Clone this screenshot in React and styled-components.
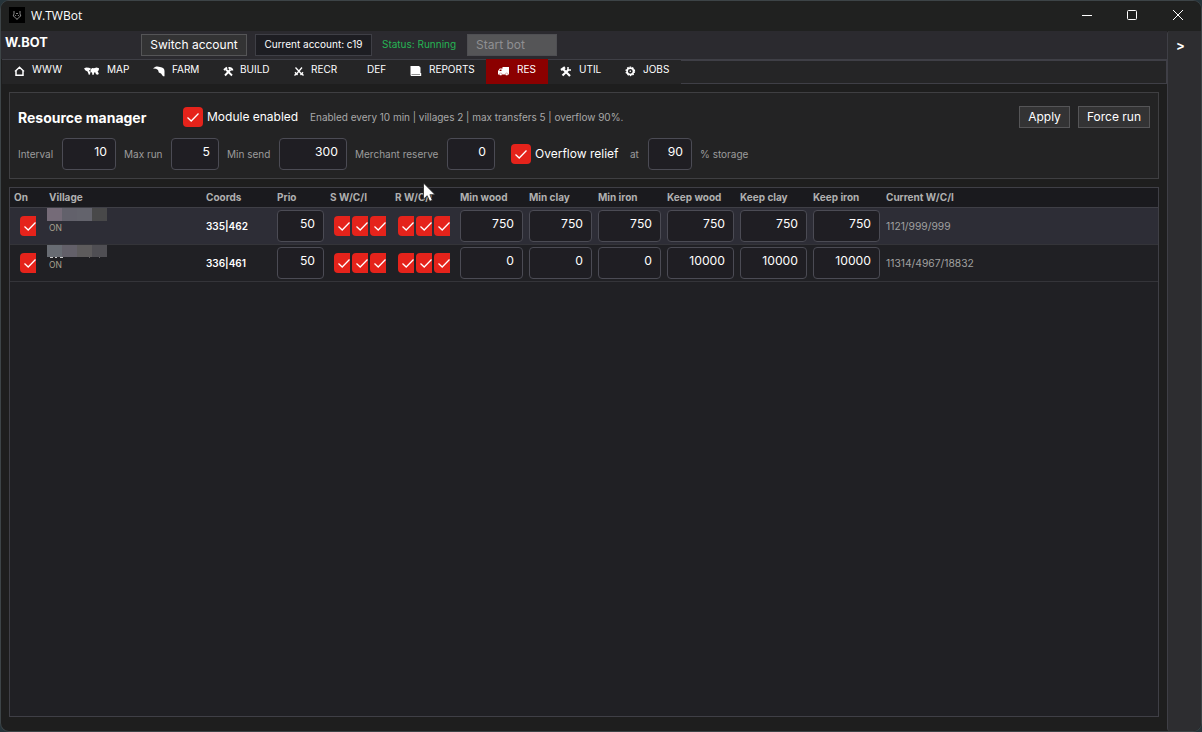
import React from 'react';
import styled, { createGlobalStyle } from 'styled-components';

const GlobalStyle = createGlobalStyle`
  * {
    box-sizing: border-box;
  }

  body {
    margin: 0;
    overflow: hidden;
    background: #26343a;
    font-family: Inter, 'Liberation Sans', sans-serif;
    color: #fff;
  }

  button {
    font-family: inherit;
  }
`;

const Window = styled.div`
  display: flex;
  flex-direction: column;
  width: 1202px;
  height: 732px;
  border: 1px solid #3d4447;
  border-radius: 9px;
  overflow: hidden;
  background: #1e1e1e;
`;

const TitleBar = styled.header`
  display: flex;
  align-items: center;
  flex: none;
  height: 30px;
  padding: 0 0 2px 8px;
  background: #202120;
`;

const AppIcon = styled.div`
  display: flex;
  align-items: center;
  justify-content: center;
  width: 16px;
  height: 16px;
  background: #000;
`;

const WindowTitle = styled.span`
  flex: 1;
  margin-left: 6px;
  padding-top: 1px;
  font-family: 'Open Sans', 'Noto Sans', sans-serif;
  font-size: 12px;
  line-height: 16px;
`;

const WindowButton = styled.div`
  display: flex;
  align-items: center;
  justify-content: center;
  width: 46px;
  height: 28px;
`;

const Main = styled.div`
  display: flex;
  flex: 1;
  min-height: 0;
`;

const Content = styled.main`
  display: flex;
  flex-direction: column;
  flex: 1;
  min-width: 0;
`;

const SidePanel = styled.aside`
  width: 34px;
  padding: 5px 0 0 8px;
  border-left: 1px solid #3f3f46;
  border-radius: 3px 0 0 3px;
  background: #2d2d30;
  font-size: 13px;
  font-weight: 700;
  line-height: 18px;
`;

const AccountBar = styled.div`
  display: flex;
  align-items: center;
  flex: none;
  height: 28px;
  padding-left: 4px;
  background: #2b2a2f;
`;

const Brand = styled.div`
  width: 136px;
  margin-top: -5px;
  font-size: 12.8px;
  font-weight: 700;
  line-height: 18px;
`;

const Button = styled.button`
  width: ${({ $width }) => $width}px;
  height: 22px;
  padding: 0 0 1px;
  border: 1px solid #555557;
  background: #333334;
  color: #fff;
  font-size: 12px;
  white-space: nowrap;

  &:disabled {
    padding-left: 8px;
    border-color: #4f4f53;
    background: #555557;
    color: #8f8f92;
    text-align: left;
  }
`;

const AccountName = styled.div`
  width: 117px;
  height: 22px;
  margin-left: 8px;
  border: 1px solid #3f3f46;
  background: #1d1d22;
  font-size: 10px;
  line-height: 19px;
  text-align: center;
  white-space: nowrap;
`;

const Status = styled.div`
  width: 85px;
  margin: -2px 0 0 10px;
  color: #26b554;
  font-size: 10px;
  line-height: 20px;
  white-space: nowrap;
`;

const TabBar = styled.nav`
  display: flex;
  flex: none;
  height: 25px;
  padding-left: 1px;
`;

const Tab = styled.div`
  display: flex;
  width: ${({ $width }) => $width}px;
  height: 25px;
  padding: 3px 0 0 12px;
  border-top: 1px solid ${({ $active }) => ($active ? '#8b0000' : '#3f3f46')};
  background: ${({ $active }) => ($active ? '#8b0000' : '#252526')};
  font-size: 10px;
  line-height: 13px;

  svg {
    flex: none;
    margin-top: 3px;
  }
`;

const TabLabel = styled.span`
  margin-left: ${({ $offset }) => $offset}px;
`;

const TabFiller = styled.div`
  flex: 1;
  height: 25px;
  border: solid #3f3f46;
  border-width: 2px 1px 1px 0;
  background: #252526;
`;

const Page = styled.section`
  display: flex;
  flex-direction: column;
  flex: 1;
  gap: 8px;
  padding: 8px 8px 14px;
`;

const Settings = styled.div`
  height: 87px;
  padding: 13px 8px 0;
  border: 1px solid #3f3f42;
  background: #232324;
`;

const SettingsRow = styled.div`
  display: flex;
  align-items: center;
  height: ${({ $height }) => $height}px;
`;

const Heading = styled.h1`
  width: 165px;
  margin: 2px 0 0;
  font-size: 14px;
  font-weight: 700;
  line-height: 20px;
  white-space: nowrap;
`;

const CheckLabel = styled.span`
  width: ${({ $width }) => $width}px;
  margin-left: 4px;
  font-size: 12px;
  line-height: 18px;
  white-space: nowrap;
`;

const Summary = styled.span`
  flex: 1;
  color: #a8a8a8;
  font-size: 10px;
  line-height: 12px;
  letter-spacing: -0.02px;
  white-space: nowrap;
`;

const Actions = styled.div`
  display: flex;
  gap: 8px;
`;

const FieldLabel = styled.span`
  width: ${({ $width }) => $width}px;
  color: #9c9c9c;
  font-size: 10px;
  line-height: 12px;
  white-space: nowrap;
`;

const NumberBox = styled.div`
  width: ${({ $width }) => $width}px;
  height: 32px;
  margin-right: ${({ $gap }) => $gap || 0}px;
  padding-right: 8px;
  border: 1px solid #4b4b54;
  border-radius: 4px;
  background: #1f1e23;
  font-size: 12.2px;
  line-height: 26px;
  text-align: right;
`;

const CheckSquare = styled.span`
  display: block;
  flex: none;
  width: ${({ $clipped }) => ($clipped ? 16 : 20)}px;
  height: 20px;
  overflow: hidden;
  border-radius: ${({ $clipped }) => ($clipped ? '4px 0 0 4px' : '4px')};
  background: #e5231b;

  svg {
    display: block;
  }
`;

const Table = styled.div`
  flex: 1;
  border: 1px solid #3f3f46;
  background: #202024;
`;

const TableRow = styled.div`
  display: grid;
  grid-template-columns: 35px 157px 71px 53px 65px 65px 69px 69px 69px 73px 73px 73px 1fr;
  align-items: center;
  height: 37px;
  padding-left: 4px;
  border-bottom: 1px solid #343439;
  background: ${({ $selected }) => ($selected ? '#2d2d36' : 'transparent')};
`;

const TableHead = styled(TableRow)`
  height: 20px;
  padding-bottom: 1px;
  border-bottom-color: #3f3f46;
  background: #1a1a1e;
  color: #b0b0b0;
  font-size: 10px;
  line-height: 12px;
  font-weight: 700;
  white-space: nowrap;
`;

const CheckGroup = styled.div`
  display: flex;
  gap: 2px;
  padding-left: ${({ $inset }) => $inset}px;
`;

const Village = styled.div`
  align-self: start;
  height: 36px;
  margin-left: -2px;
`;

const HiddenName = styled.div`
  display: flex;
  width: 60px;
  height: ${({ $height }) => $height}px;
`;

const NameBlock = styled.span`
  flex: 1;
  background: ${({ $color }) => $color};
`;

const NameRemainder = styled.svg`
  display: block;
  height: 1px;
`;

const VillageState = styled.div`
  padding: 1px 0 0 2px;
  color: #aaa28f;
  font-size: 8.5px;
  line-height: 13px;
`;

const Coords = styled.span`
  font-size: 10px;
  font-weight: 600;
`;

const Current = styled.span`
  color: #a0a0a0;
  font-size: 10.3px;
`;

const Cursor = styled.svg`
  position: absolute;
  top: 182px;
  left: 422px;
`;

const icons = {
  home: (
    <svg width="11" height="11" viewBox="0 0 11 11" fill="none" stroke="#fff" strokeWidth="1.5">
      <path d="M1 5.500 5.500 1.300 10 5.500M2 5v4.200h7V5" />
    </svg>
  ),
  map: (
    <svg width="16" height="11" viewBox="0 0 16 11" fill="#fff">
      <path d="M0 2.500 2 1.500l3 .3 2 .9-1 1.200-1.200.8L6.500 6 6 8 5 9.200 4.200 7l-.7-1.500L1.500 4.500zM6.500 4 8 2l2 .3 2.500-.8L15 2.300l-.2 1.900-1.200 1 1.200 2.300-.8 1.200-2-.5-.8-2-1 .3-.5 2.200-1.200.2L8 6.500 6.500 6z" />
    </svg>
  ),
  farm: (
    <svg width="13" height="12" viewBox="0 0 13 12" fill="#fff">
      <path d="M0 2.500C2 0 5 0 7 1c3 .2 4.500 2 4.500 4v5.200H10L8 7.500 5.800 6.500 5 4 3 2.800z" />
    </svg>
  ),
  build: (
    <svg width="11" height="11" viewBox="0 0 11 11" stroke="#fff" fill="none">
      <path strokeWidth="1.900" d="M2 9.500 7.500 3.500M9 9.500 3 3.500" />
      <path strokeWidth="2" d="M1 4 4 1.500M5.500 2Q8.500 1.500 9.500 4.500" />
    </svg>
  ),
  swords: (
    <svg width="10" height="11" viewBox="0 0 10 11" stroke="#fff" fill="none">
      <path strokeWidth="1.300" d="m1.500 1.500 6 6.500M8 1.500 2.500 8" />
      <path strokeWidth="1.400" d="m1 6.300 2.500 2.700M9 6.300 6.500 9M.5 9.500 2 8M9.500 9.500 8 8" />
    </svg>
  ),
  reports: (
    <svg width="13" height="12" viewBox="0 0 13 12">
      <path fill="#fff" d="M.5 0H9l1.500 1.500V7h.7v3H1L.5 9z" />
      <path stroke="#777" strokeWidth=".8" d="M1.500 8.500h8.500" />
    </svg>
  ),
  truck: (
    <svg width="12" height="11" viewBox="0 0 12 11">
      <path fill="#fff" d="M4.500 1H11v7.500H0V5l1.800-2.500h2.700z" />
      <path fill="#8b0000" d="M1.200 5 2.300 3.500h1.200V5z" />
      <circle cx="2.700" cy="8.300" r="1.300" fill="#fff" stroke="#8b0000" strokeWidth=".3" />
      <circle cx="8.700" cy="8.300" r="1.300" fill="#fff" stroke="#8b0000" strokeWidth=".3" />
    </svg>
  ),
  tools: (
    <svg width="12" height="12" viewBox="0 0 12 12" stroke="#fff" fill="none">
      <path strokeWidth="2.200" d="m3 3 7 7M8.500 3.800 2.500 9.500" />
      <path strokeWidth="2.400" d="M1 4 5 1.200" />
      <path strokeWidth="1.500" d="M8 1v3h3" />
    </svg>
  ),
  gear: (
    <svg width="11" height="11" viewBox="0 0 11 11" stroke="#fff" fill="none">
      <circle cx="5.300" cy="5.300" r="4.200" strokeWidth="1.300" strokeDasharray="1.600 1.050" />
      <circle cx="5.300" cy="5.300" r="3.200" strokeWidth="1.600" />
      <circle cx="5.300" cy="5.300" r=".8" fill="#fff" stroke="none" />
    </svg>
  ),
};

const tabs = [
  { label: 'WWW', icon: 'home', width: 70, offset: 7 },
  { label: 'MAP', icon: 'map', width: 69, offset: 7 },
  { label: 'FARM', icon: 'farm', width: 70, offset: 6 },
  { label: 'BUILD', icon: 'build', width: 71, offset: 6 },
  { label: 'RECR', icon: 'swords', width: 67, offset: 7 },
  { label: 'DEF', width: 49, offset: 6 },
  { label: 'REPORTS', icon: 'reports', width: 88, offset: 6 },
  { label: 'RES', icon: 'truck', width: 62, offset: 7 },
  { label: 'UTIL', icon: 'tools', width: 65, offset: 7 },
  { label: 'JOBS', icon: 'gear', width: 68, offset: 7 },
];

const columns = [
  'On', 'Village', 'Coords', 'Prio', 'S W/C/I', 'R W/C/I', 'Min wood', 'Min clay',
  'Min iron', 'Keep wood', 'Keep clay', 'Keep iron', 'Current W/C/I',
];

const villages = [
  {
    coords: '335|462',
    blocks: ['#756b78', '#62616b', '#63636c', '#484849'],
    min: [750, 750, 750],
    keep: [750, 750, 750],
    current: '1121/999/999',
    selected: true,
  },
  {
    coords: '336|461',
    blocks: ['#686c73', '#636069', '#5d5b5c', '#4f4e53'],
    min: [0, 0, 0],
    keep: [10000, 10000, 10000],
    current: '11314/4967/18832',
  },
];

const Check = ({ clipped }) => (
  <CheckSquare $clipped={clipped}>
    <svg width="20" height="20" viewBox="0 0 20 20" fill="none" stroke="#fff" strokeWidth="1.300">
      <path d="m4.500 10.500 3.700 3.500 7.300-7.500" />
    </svg>
  </CheckSquare>
);

const CheckTriple = ({ inset }) => (
  <CheckGroup $inset={inset}>
    <Check clipped />
    <Check clipped />
    <Check clipped />
  </CheckGroup>
);

const VillageRow = ({ village }) => (
  <TableRow $selected={village.selected}>
    <CheckGroup $inset={6}>
      <Check clipped />
    </CheckGroup>
    <Village>
      <HiddenName $height={village.selected ? 13 : 12}>
        {village.blocks.map((color) => (
          <NameBlock key={color} $color={color} />
        ))}
      </HiddenName>
      {!village.selected && (
        <NameRemainder width="60" height="1" fill="#c8c8c8">
          <path d="M3 0h3v1H3zM8 0h2v1H8zM13 0h3v1h-3z" />
          <path d="M42 0h1v1h-1zM52 0h1v1h-1z" opacity=".4" />
        </NameRemainder>
      )}
      <VillageState>ON</VillageState>
    </Village>
    <Coords>{village.coords}</Coords>
    <NumberBox $width={47}>50</NumberBox>
    <CheckTriple inset={4} />
    <CheckTriple inset={3} />
    {village.min.map((value, i) => (
      <NumberBox key={i} $width={63}>{value}</NumberBox>
    ))}
    {village.keep.map((value, i) => (
      <NumberBox key={i} $width={67}>{value}</NumberBox>
    ))}
    <Current>{village.current}</Current>
  </TableRow>
);

const App = () => (
  <>
    <GlobalStyle />
    <Window>
      <TitleBar>
        <AppIcon>
          <svg width="10" height="11" viewBox="0 0 10 11" fill="none" stroke="#999">
            <path d="M2 1v2.800L1.200 6l2.300 1.700L5 9.500l1.500-1.800L8.800 6 8 3.800V1M4 3.500h2" strokeWidth=".9" />
            <path d="M3 5.500h1.200M5.800 5.500H7" strokeWidth=".8" />
          </svg>
        </AppIcon>
        <WindowTitle>W.TWBot</WindowTitle>
        <WindowButton>
          <svg width="11" height="10" stroke="#fff"><path d="M1 5.500h10" /></svg>
        </WindowButton>
        <WindowButton>
          <svg width="10" height="10" fill="none" stroke="#fff"><rect x=".5" y=".5" width="9" height="9" rx="1" /></svg>
        </WindowButton>
        <WindowButton>
          <svg width="10" height="10" stroke="#fff"><path d="m0 0 10 10M10 0 0 10" /></svg>
        </WindowButton>
      </TitleBar>
      <Main>
        <Content>
          <AccountBar>
            <Brand>W.BOT</Brand>
            <Button $width={106}>Switch account</Button>
            <AccountName>Current account: c19</AccountName>
            <Status>Status: Running</Status>
            <Button $width={90} disabled>Start bot</Button>
          </AccountBar>
          <TabBar>
            {tabs.map(({ label, icon, width, offset }) => (
              <Tab key={label} $width={width} $active={label === 'RES'}>
                {icons[icon]}
                <TabLabel $offset={offset}>{label}</TabLabel>
              </Tab>
            ))}
            <TabFiller />
          </TabBar>
          <Page>
            <Settings>
              <SettingsRow $height={22}>
                <Heading>Resource manager</Heading>
                <Check />
                <CheckLabel $width={103}>Module enabled</CheckLabel>
                <Summary>Enabled every 10 min | villages 2 | max transfers 5 | overflow 90%.</Summary>
                <Actions>
                  <Button $width={51}>Apply</Button>
                  <Button $width={72}>Force run</Button>
                </Actions>
              </SettingsRow>
              <SettingsRow $height={52}>
                <FieldLabel $width={44}>Interval</FieldLabel>
                <NumberBox $width={54} $gap={8}>10</NumberBox>
                <FieldLabel $width={47}>Max run</FieldLabel>
                <NumberBox $width={48} $gap={8}>5</NumberBox>
                <FieldLabel $width={52}>Min send</FieldLabel>
                <NumberBox $width={68} $gap={8}>300</NumberBox>
                <FieldLabel $width={92}>Merchant reserve</FieldLabel>
                <NumberBox $width={48} $gap={16}>0</NumberBox>
                <Check />
                <CheckLabel $width={95}>Overflow relief</CheckLabel>
                <FieldLabel $width={18}>at</FieldLabel>
                <NumberBox $width={44} $gap={8}>90</NumberBox>
                <FieldLabel $width={60}>% storage</FieldLabel>
              </SettingsRow>
            </Settings>
            <Table>
              <TableHead>
                {columns.map((name) => (
                  <span key={name}>{name}</span>
                ))}
              </TableHead>
              {villages.map((village) => (
                <VillageRow key={village.coords} village={village} />
              ))}
            </Table>
          </Page>
        </Content>
        <SidePanel>&gt;</SidePanel>
      </Main>
    </Window>
    <Cursor width="14" height="21" viewBox="0 0 14 21">
      <path d="M1.500 1v16.200l3.700-3.500 2.500 5.600 2.600-1.100-2.400-5.500h5.200z" fill="#fff" stroke="#222" strokeWidth=".8" />
    </Cursor>
  </>
);

export default App;
